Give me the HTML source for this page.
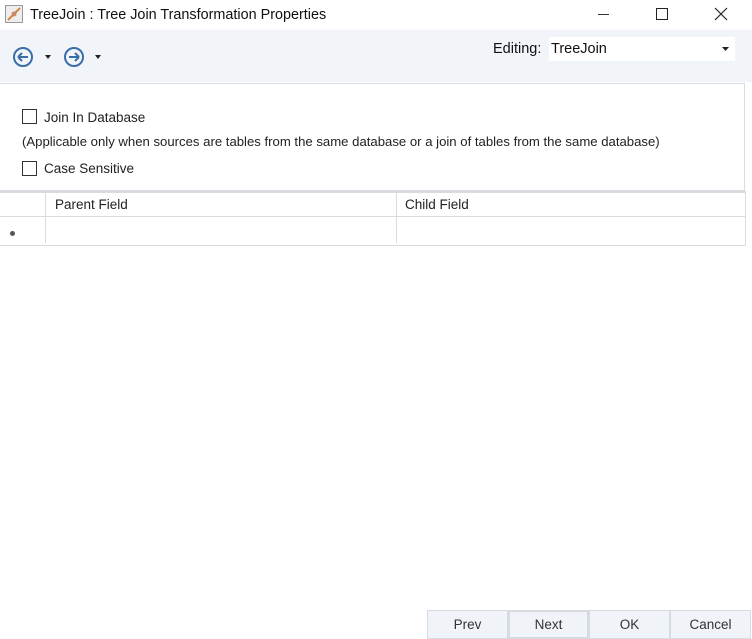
<!DOCTYPE html>
<html><head><style>
body{margin:0;width:752px;height:638px;background:#fff;font-family:"Liberation Sans",sans-serif;font-size:13px;color:#222;position:relative;overflow:hidden}
.a{position:absolute}
.t{font-family:"Liberation Sans",sans-serif;font-size:14px;color:#111}
.cb{width:13px;height:13px;border:1px solid #333;background:#fff}
.btn{position:absolute;top:610px;height:27px;width:79px;background:#f0f3f7;border:1px solid #d6dbe1;text-align:center;line-height:28px;font-size:13.5px;color:#333}
</style></head><body>
<svg class="a" style="left:5px;top:5px" width="18" height="18"><rect x="0.5" y="0.5" width="17" height="17" fill="#eee" stroke="#999"/><path d="M3 15 L15 3" stroke="#d08a40" stroke-width="2"/><circle cx="9" cy="9" r="2.5" fill="#c86"/></svg>
<div class="a t" style="left:30px;top:7px;font-size:14.4px">TreeJoin : Tree Join Transformation Properties</div>
<div class="a" style="left:598px;top:14px;width:11px;height:1px;background:#333"></div>
<div class="a" style="left:656px;top:8px;width:10px;height:10px;border:1px solid #222"></div>
<svg class="a" style="left:714px;top:7px" width="14" height="14"><path d="M1 1L13 13M13 1L1 13" stroke="#222" stroke-width="1.2"/></svg>
<div class="a" style="left:0;top:30px;width:752px;height:52px;background:#f1f4f8"></div>
<svg class="a" style="left:12px;top:46px" width="95" height="22"><circle cx="11" cy="11" r="9" fill="none" stroke="#3a6ea8" stroke-width="2"/><path d="M6 11H16M6 11L10 7M6 11L10 15" stroke="#3a6ea8" stroke-width="2" fill="none"/><path d="M33 9h6l-3 4z" fill="#222"/><circle cx="62" cy="11" r="9" fill="none" stroke="#3a6ea8" stroke-width="2"/><path d="M67 11H57M67 11L63 7M67 11L63 15" stroke="#3a6ea8" stroke-width="2" fill="none"/><path d="M83 9h6l-3 4z" fill="#222"/></svg>
<div class="a t" style="left:493px;top:41px;font-size:14.5px">Editing:</div>
<div class="a" style="left:549px;top:37px;width:186px;height:24px;background:#fff"></div>
<div class="a t" style="left:551px;top:41px;font-size:14.5px">TreeJoin</div>
<svg class="a" style="left:722px;top:46px" width="8" height="6"><path d="M0 1h7l-3.5 4z" fill="#222"/></svg>
<div class="a" style="left:0;top:83px;width:744px;height:106px;border:1px solid #d8dce0;border-left:none;background:#fff"></div>
<div class="a cb" style="left:22px;top:109px"></div>
<div class="a" style="left:44px;top:110px;font-size:13.5px">Join In Database</div>
<div class="a" style="left:22px;top:134px;font-size:13.15px">(Applicable only when sources are tables from the same database or a join of tables from the same database)</div>
<div class="a cb" style="left:22px;top:161px"></div>
<div class="a" style="left:44px;top:161px;font-size:13.5px">Case Sensitive</div>
<div class="a" style="left:0;top:191px;width:745px;height:52px;border-top:2px solid #d8dce0;border-bottom:1px solid #d8dce0;border-right:1px solid #d8dce0"></div>
<div class="a" style="left:0;top:216px;width:745px;height:1px;background:#d8dce0"></div>
<div class="a" style="left:45px;top:193px;width:1px;height:50px;background:#d8dce0"></div>
<div class="a" style="left:396px;top:193px;width:1px;height:50px;background:#d8dce0"></div>
<div class="a" style="left:55px;top:197px;font-size:13.5px">Parent Field</div>
<div class="a" style="left:405px;top:197px;font-size:13.5px">Child Field</div>
<div class="a" style="left:10px;top:231px;width:5px;height:5px;border-radius:50%;background:#555"></div>
<div class="btn" style="left:427px">Prev</div>
<div class="btn" style="left:508px;border:2px solid #d6dbe1;height:25px;width:77px;line-height:26px">Next</div>
<div class="btn" style="left:589px">OK</div>
<div class="btn" style="left:670px">Cancel</div>
</body></html>
